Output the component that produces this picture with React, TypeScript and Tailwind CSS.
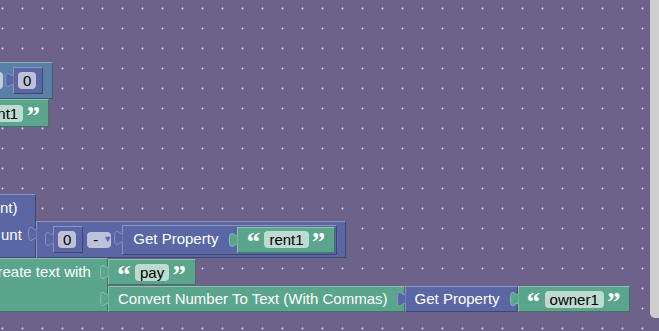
import type { ReactNode } from "react";

// Blockly-ish workspace: a few value blocks on a dotted canvas.

const PURPLE =
  "bg-[#5b67a5] border border-t-[#8c94c1] border-l-[#8c94c1] border-b-[#3f4874] border-r-[#3f4874]";
const GREEN =
  "bg-[#5ba58c] border border-t-[#8cc1ae] border-l-[#8cc1ae] border-b-[#407362] border-r-[#407362]";
const STEEL =
  "bg-[#5b80a5] border border-t-[#8ca6c1] border-l-[#8ca6c1] border-b-[#405a74] border-r-[#405a74]";

// ─── output tab on the left edge of a value block ───────────────────────────
function Tab({ fill, stroke }: { fill: string; stroke: string }) {
  return (
    <svg
      className="absolute left-[-10px] top-[4px] overflow-visible"
      width="10"
      height="16"
      viewBox="0 0 10 16"
    >
      <path
        d="M9.5 15.5 c0 -10 -8 8 -8 -7.5 s8 2.5 8 -7.5"
        fill={fill}
        stroke={stroke}
        strokeWidth="1"
      />
    </svg>
  );
}

function Field({ children }: { children: ReactNode }) {
  return (
    <div className="flex h-[17px] items-center rounded-[4px] bg-white/60 px-[5px] leading-none text-black">
      {children}
    </div>
  );
}

function Quote({ close }: { close?: boolean }) {
  return (
    <span className="flex h-[17px] w-[10px] items-start justify-center overflow-visible font-['Liberation_Serif',serif] text-[27px] font-bold leading-[22px] text-white">
      {close ? "\u201D" : "\u201C"}
    </span>
  );
}

function TextBlock({
  value,
  tall,
  className = "",
}: {
  value: string;
  tall?: boolean;
  className?: string;
}) {
  return (
    <div
      className={`relative flex ${tall ? "h-[28px]" : "h-[26px]"} items-center pl-[10px] pr-[10px] ${GREEN} ${className}`}
    >
      <Tab fill="#5ba58c" stroke="#8cc1ae" />
      <Quote />
      <div className="ml-[6px]">
        <Field>{value}</Field>
      </div>
      <div className="ml-[5px]">
        <Quote close />
      </div>
    </div>
  );
}

function NumberBlock() {
  return (
    <div className={`relative flex h-[27px] items-center pl-[4px] pr-[6px] ${PURPLE}`}>
      <Tab fill="#5b67a5" stroke="#8c94c1" />
      <Field>0</Field>
    </div>
  );
}

function Arithmetic() {
  return (
    <div className={`relative flex h-[37px] items-center pl-[16px] pr-[8px] ${PURPLE}`}>
      <Tab fill="#5b67a5" stroke="#8c94c1" />
      <NumberBlock />
      {/* operator dropdown */}
      <div className="ml-[4px] flex h-[16px] w-[24px] items-center rounded-[4px] bg-white/60 pl-[6px] leading-none text-black">
        <span>-</span>
        <span className="ml-[5px] text-[9px] text-[#5b67a5]">▼</span>
      </div>
      <div className={`relative ml-[11px] flex h-[30px] items-center pl-[10px] pr-[1px] ${PURPLE}`}>
        <Tab fill="#5b67a5" stroke="#8c94c1" />
        <span className="whitespace-nowrap text-white">Get Property</span>
        <TextBlock value="rent1" className="ml-[19px]" />
      </div>
    </div>
  );
}

export default function App() {
  return (
    <div className="relative h-[331px] w-[659px] overflow-hidden bg-[#6d638a] font-['Liberation_Sans',Arial,sans-serif] text-[15px]">
      {/* workspace grid */}
      <svg className="absolute inset-0" width="659" height="331">
        <defs>
          <pattern id="grid" width="20" height="20" patternUnits="userSpaceOnUse">
            <path d="M1 8.5h3M2.5 7v3" stroke="#a69fbd" />
            <rect x="2" y="8" width="1" height="1" fill="#d6d2e2" />
          </pattern>
        </defs>
        <rect width="659" height="331" fill="url(#grid)" />
      </svg>

      {/* ── top-left blocks ── */}
      <div className="absolute left-[-30px] top-[62px] flex flex-col items-start">
        <div className={`flex h-[37px] items-center pr-[9px] ${STEEL}`}>
          <div className="h-[17px] w-[32px] rounded-[4px] bg-white/60" />
          <div className="ml-[10px]">
            <NumberBlock />
          </div>
        </div>
        <TextBlock value="rent1" tall className="ml-[-18px]" />
      </div>

      {/* ── bottom stack ── */}
      <div className="absolute left-0 top-[194px] flex flex-col items-start">
        <div className="flex items-start">
          <div className={`flex w-[36px] flex-col border-l-0 ${PURPLE}`}>
            <div className="flex h-[26px] items-center whitespace-nowrap text-white">nt)</div>
            <div className="h-[36px] whitespace-nowrap pl-[1px] pt-[4px] leading-[20px] text-white">unt</div>
          </div>
          <div className="mt-[27px]">
            <Arithmetic />
          </div>
        </div>

        <div className="ml-[-20px] flex items-start">
          <div className={`h-[54px] w-[128px] ${GREEN}`}>
            <div className="flex h-[26px] items-center whitespace-nowrap pl-[9px] text-white">
              create text with
            </div>
          </div>
          <div className="flex flex-col items-start gap-[1px] pt-[1px]">
            <TextBlock value="pay" className="pr-[11px]" />
            <div className="flex items-start">
              <div
                className={`relative flex h-[26px] items-center whitespace-nowrap pl-[9px] pr-[16px] text-white ${GREEN}`}
              >
                <Tab fill="#5ba58c" stroke="#8cc1ae" />
                Convert Number To Text (With Commas)
              </div>
              <div
                className={`relative flex h-[26px] items-center whitespace-nowrap pl-[9px] pr-[17px] text-white ${PURPLE}`}
              >
                <Tab fill="#5b67a5" stroke="#8c94c1" />
                Get Property
              </div>
              <TextBlock value="owner1" />
            </div>
          </div>
        </div>
      </div>

      {/* vertical scrollbar */}
      <div className="absolute left-[650px] top-0 h-[318px] w-[9px] rounded-bl-[5px] bg-[#cecece]" />
    </div>
  );
}
